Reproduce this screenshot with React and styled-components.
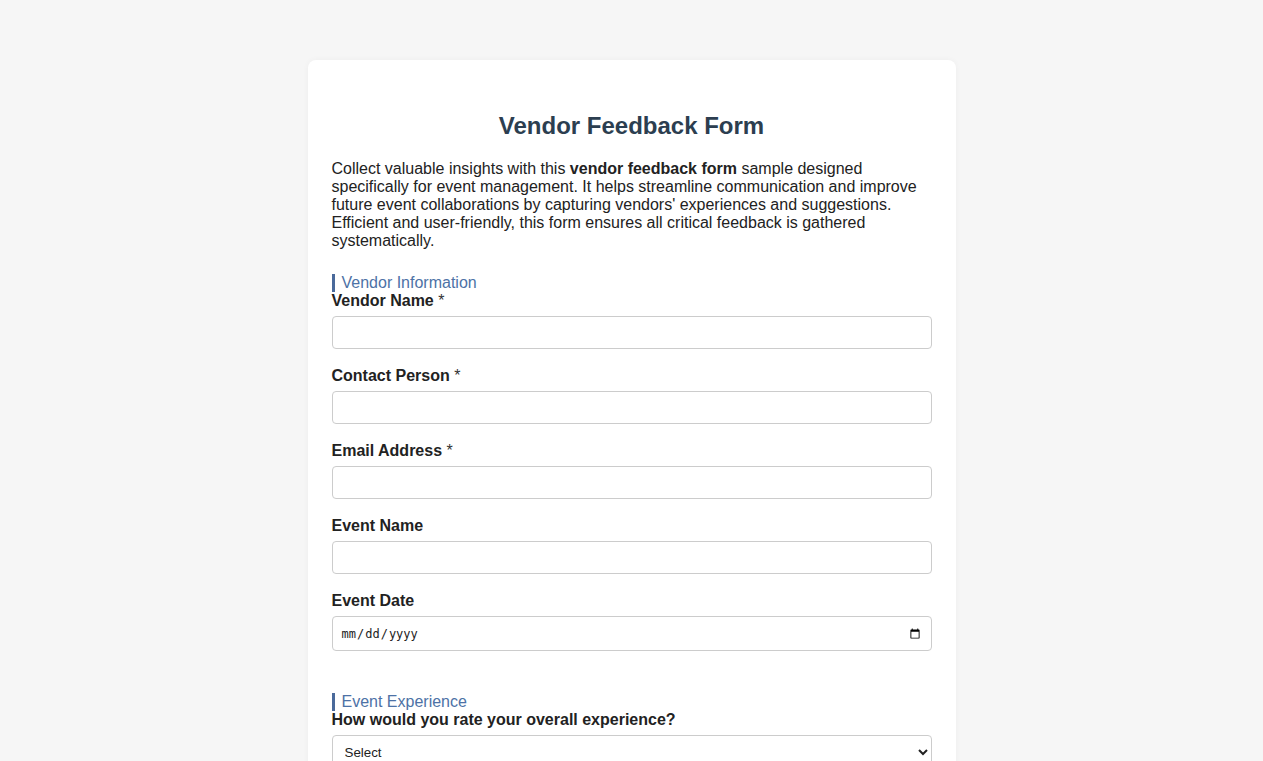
import React from "react";
import styled, { createGlobalStyle } from "styled-components";

const Global = createGlobalStyle`
  html, body { margin: 0; padding: 0; background: #f6f6f6; }
  body { font-family: "Liberation Sans", Arial, sans-serif; color: #222; }
  * { box-sizing: border-box; }
`;

const Page = styled.div`
  padding: 60px 0 40px;
  display: flex;
  justify-content: center;
`;

const Card = styled.form`
  width: 648px;
  background: #fff;
  border-radius: 8px;
  padding: 24px;
  box-shadow: 0 0 6px rgba(0, 0, 0, 0.04);
`;

const Title = styled.h1`
  margin: 28px 0 20px;
  text-align: center;
  font-size: 24px;
  font-weight: bold;
  color: #2c3e50;
`;

const Intro = styled.p`
  margin: 0;
  font-size: 16px;
  line-height: 18px;
  color: #222;
`;

const Section = styled.section`
  margin-top: 24px;
  & + & {
    margin-top: 42px;
  }
`;

const SectionTitle = styled.h2`
  margin: 0;
  padding-left: 7px;
  border-left: 3px solid #4a6a9b;
  font-size: 16px;
  line-height: 18px;
  font-weight: normal;
  color: #4d72a6;
`;

const Field = styled.div`
  margin-bottom: 18px;
`;

const Label = styled.label`
  display: block;
  margin-bottom: 6px;
  font-size: 16px;
  line-height: 18px;
  font-weight: bold;
  color: #222;
`;

const Req = styled.span`
  font-weight: normal;
  color: #333;
`;

const Input = styled.input`
  display: block;
  width: 100%;
  height: ${(p) => (p.type === "date" ? "35px" : "33px")};
  padding: 8px;
  border: 1px solid #ccc;
  border-radius: 4px;
  background: #fff;
  font-size: ${(p) => (p.type === "date" ? "12px" : "13.33px")};
  font-family: ${(p) => (p.type === "date" ? '"DejaVu Sans Mono", monospace' : '"Liberation Sans", Arial, sans-serif')};
  color: #222;
`;

const Select = styled.select`
  display: block;
  width: 100%;
  height: 34px;
  padding: 8px;
  border: 1px solid #ccc;
  border-radius: 4px;
  background: #fff;
  font-size: 13.33px;
  font-family: "Liberation Sans", Arial, sans-serif;
  color: #222;
`;

export default function App() {
  return (
    <>
      <Global />
      <Page>
        <Card onSubmit={(e) => e.preventDefault()}>
          <Title>Vendor Feedback Form</Title>
          <Intro>
            Collect valuable insights with this <b>vendor feedback form</b> sample designed
            specifically for event management. It helps streamline communication and improve
            future event collaborations by capturing vendors' experiences and suggestions.
            Efficient and user-friendly, this form ensures all critical feedback is gathered
            systematically.
          </Intro>

          <Section>
            <SectionTitle>Vendor Information</SectionTitle>
            <Field>
              <Label>Vendor Name <Req>*</Req></Label>
              <Input type="text" />
            </Field>
            <Field>
              <Label>Contact Person <Req>*</Req></Label>
              <Input type="text" />
            </Field>
            <Field>
              <Label>Email Address <Req>*</Req></Label>
              <Input type="email" />
            </Field>
            <Field>
              <Label>Event Name</Label>
              <Input type="text" />
            </Field>
            <Field>
              <Label>Event Date</Label>
              <Input type="date" />
            </Field>
          </Section>

          <Section>
            <SectionTitle>Event Experience</SectionTitle>
            <Field>
              <Label>How would you rate your overall experience?</Label>
              <Select defaultValue="">
                <option value="">Select</option>
                <option>Excellent</option>
                <option>Good</option>
                <option>Average</option>
                <option>Poor</option>
              </Select>
            </Field>
          </Section>
        </Card>
      </Page>
    </>
  );
}
